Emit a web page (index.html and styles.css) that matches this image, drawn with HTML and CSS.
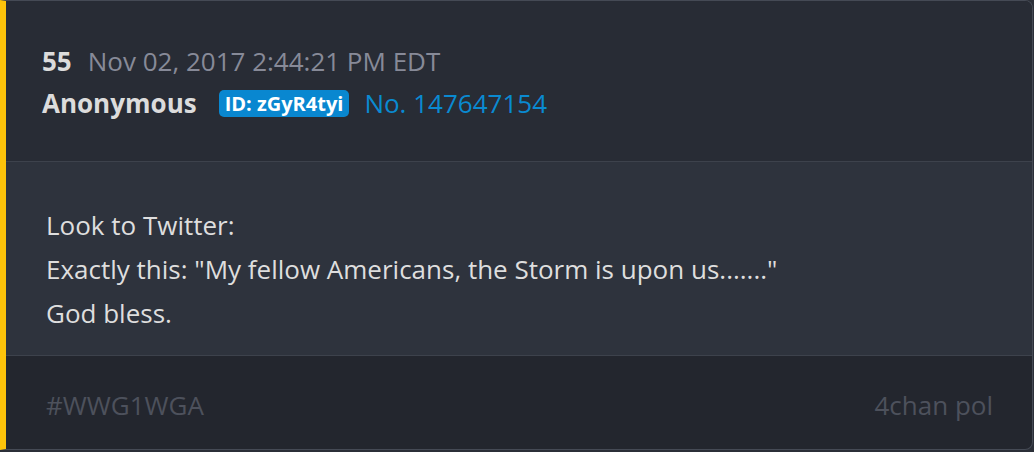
FILE: index.html
```html
<!DOCTYPE html>
<html>
<head>
<meta charset="utf-8">
<link rel="stylesheet" href="styles.css">
</head>
<body>
<div class="card">
  <div class="head">
    <div class="row1"><span class="num">55</span><span class="date">Nov 02, 2017 2:44:21 PM EDT</span></div>
    <div class="row2"><span class="name">Anonymous</span><span class="badge">ID: zGyR4tyi</span><span class="no">No. 147647154</span></div>
  </div>
  <div class="body">
    <p>Look to Twitter:</p>
    <p>Exactly this: "My fellow Americans, the Storm is upon us......."</p>
    <p>God bless.</p>
  </div>
  <div class="foot">
    <span class="tag">#WWG1WGA</span>
    <span class="src">4chan pol</span>
  </div>
</div>
</body>
</html>
```

FILE: styles.css
```css
html, body { margin: 0; padding: 0; background: #2b2f38; }
body { font-family: "Open Sans", "Liberation Sans", sans-serif; }
.card {
  width: 1033px;
  height: 450px;
  box-sizing: border-box;
  border: 1px solid #454a55;
  border-left: 6px solid #fdc30a;
  border-radius: 0 8px 8px 0;
  overflow: hidden;
  display: flex;
  flex-direction: column;
  background: #23262e;
}
.head {
  background: #282c35;
  height: 161px;
  box-sizing: border-box;
  padding: 44px 36px 0;
  border-bottom: 1px solid #3d424c;
}
.row1 { font-size: 26px; line-height: 32px; display: flex; align-items: baseline; }
.num { font-weight: 700; color: #dcdcdc; margin-right: 16px; }
.date { color: #878a98; }
.row2 { margin-top: 8px; line-height: 36px; display: flex; align-items: center; }
.name { font-size: 26px; font-weight: 700; color: #dcdcdc; margin-right: 22px; }
.badge {
  background: #0987d0;
  color: #fff;
  font-size: 20px;
  font-weight: 700;
  line-height: 27px;
  padding: 0 6px;
  border-radius: 5px;
  margin-right: 15px;
}
.no { font-size: 26px; color: #0a8ad1; }
.body {
  background: #2e333d;
  height: 194px;
  box-sizing: border-box;
  padding: 41px 40px 0;
  border-bottom: 1px solid #3d424c;
  color: #dedede;
  font-size: 26px;
  line-height: 44px;
}
.body p { margin: 0; }
.foot {
  flex: 1;
  display: flex;
  justify-content: space-between;
  padding: 33px 39px 0 40px;
  font-size: 26px;
  line-height: 32px;
  color: #4d515c;
}
```
